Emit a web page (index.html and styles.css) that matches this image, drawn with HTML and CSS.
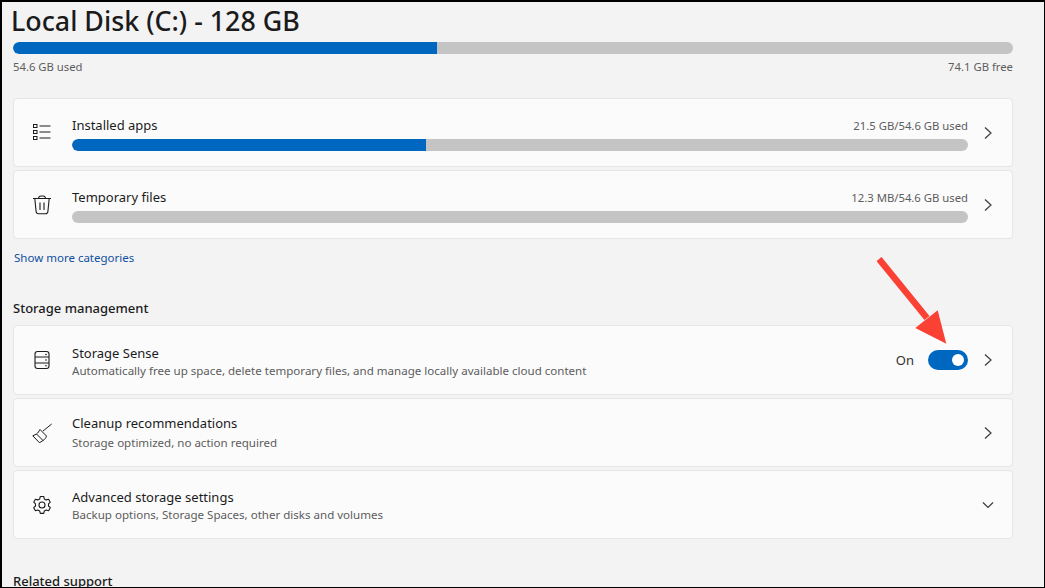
FILE: index.html
```html
<!DOCTYPE html>
<html lang="en">
<head>
<meta charset="utf-8">
<title>Storage</title>
<link rel="stylesheet" href="styles.css">
</head>
<body>
<main class="frame">
  <h1 class="title">Local Disk (C:) - 128 GB</h1>
  <div class="bar"><div class="fill" style="width:42.4%"></div></div>
  <div class="bar-labels"><span>54.6 GB used</span><span>74.1 GB free</span></div>

  <section class="group">
    <div class="card card-bar">
      <svg class="icon" viewBox="0 0 20 20"><g fill="none" stroke="#1c1c1c" stroke-width="1"><rect x="1.500" y="1.500" width="3.500" height="3"/><rect x="1.500" y="7.500" width="3.500" height="3"/><rect x="1.500" y="13.500" width="3.500" height="3"/><path d="M7.500 3h11M7.500 9h11M7.500 15h11"/></g></svg>
      <div class="body">
        <div class="row"><span class="name">Installed apps</span><span class="meta">21.5 GB/54.6 GB used</span></div>
        <div class="bar"><div class="fill" style="width:39.5%"></div></div>
      </div>
      <svg class="chev" viewBox="0 0 10 14"><path d="M2 1.500 8 7l-6 5.500"/></svg>
    </div>
    <div class="card card-bar">
      <svg class="icon" viewBox="0 0 20 20"><g fill="none" stroke="#1c1c1c" stroke-width="1.100"><path d="M1 3.500h18M6.500 3.500V3a2.500 2.500 0 0 1 2.500-2h2a2.500 2.500 0 0 1 2.500 2v.5M2.800 3.500l1.300 13a2.500 2.500 0 0 0 2.500 2.300h6.800a2.500 2.500 0 0 0 2.500-2.300l1.300-13M8 7.500v7.500M12 7.500v7.500"/></g></svg>
      <div class="body">
        <div class="row"><span class="name">Temporary files</span><span class="meta">12.3 MB/54.6 GB used</span></div>
        <div class="bar"></div>
      </div>
      <svg class="chev" viewBox="0 0 10 14"><path d="M2 1.500 8 7l-6 5.500"/></svg>
    </div>
  </section>

  <a class="more" href="#">Show more categories</a>
  <h2 class="heading">Storage management</h2>

  <section class="group">
    <div class="card card-tall">
      <svg class="icon" viewBox="0 0 20 20"><g fill="none" stroke="#1c1c1c" stroke-width="1.100"><rect x="3" y="1.500" width="14" height="17" rx="2.500"/><path d="M3 7h14M3 13h14"/></g><circle cx="14" cy="4.500" r=".8" fill="#1c1c1c"/><circle cx="14" cy="10" r=".8" fill="#1c1c1c"/><circle cx="14" cy="15.800" r=".8" fill="#1c1c1c"/></svg>
      <div class="body">
        <div class="name">Storage Sense</div>
        <div class="sub">Automatically free up space, delete temporary files, and manage locally available cloud content</div>
      </div>
      <span class="state">On</span>
      <span class="toggle"><span class="knob"></span></span>
      <svg class="chev" viewBox="0 0 10 14"><path d="M2 1.500 8 7l-6 5.500"/></svg>
    </div>
    <div class="card">
      <svg class="icon" viewBox="0 0 20 20"><g fill="none" stroke="#1c1c1c" stroke-width="1"><path d="M19.700 1 11 8M8 6.500l6.500 6.500c-.6 2-1.800 3.500-3.500 4.500L7.500 19.800.8 12.800 4.500 11c1.500-1 2.500-2.800 3.500-4.500zM4.500 11l6.500 6.500"/></g></svg>
      <div class="body body-wide">
        <div class="name">Cleanup recommendations</div>
        <div class="sub">Storage optimized, no action required</div>
      </div>
      <svg class="chev" viewBox="0 0 10 14"><path d="M2 1.500 8 7l-6 5.500"/></svg>
    </div>
    <div class="card">
      <svg class="icon" viewBox="0 0 20 20"><g fill="none" stroke="#1c1c1c" stroke-width="1.100"><circle cx="10" cy="10" r="3"/><path d="M8.300 1.500h3.400l.6 2.400 1.900 1 2.400-.7 1.700 3-1.800 1.700v2.100l1.800 1.700-1.700 3-2.400-.7-1.900 1-.6 2.400H8.300l-.6-2.400-1.900-1-2.400.7-1.700-3 1.800-1.700V8.900L1.700 7.200l1.700-3 2.400.7 1.900-1z" stroke-linejoin="round"/></g></svg>
      <div class="body">
        <div class="name">Advanced storage settings</div>
        <div class="sub">Backup options, Storage Spaces, other disks and volumes</div>
      </div>
      <svg class="chev chev-down" viewBox="0 0 12 8"><path d="M1 1.500 6 6.500l5-5"/></svg>
    </div>
  </section>

  <h2 class="heading heading-last">Related support</h2>

  <svg class="arrow" viewBox="0 0 80 95"><path d="M2 2 50 61" stroke="#fb4034" stroke-width="6.500" fill="none"/><path d="M69.300 86.700 60.700 53.300 38.300 71z" fill="#fb4034"/></svg>
</main>
</body>
</html>
```
FILE: styles.css
```css
* { box-sizing: border-box; }
html, body { margin: 0; height: 100%; background: #000; overflow: hidden; }
body { font-family: "Noto Sans", "Open Sans", sans-serif; color: #1b1b1b; }
.frame {
  position: relative;
  width: 1042px;
  height: 585px;
  margin: 2px 0 0 2px;
  padding: 0 31px 0 11px;
  background: #f3f3f3;
  overflow: hidden;
}
.title { margin: 0 0 0 -2px; height: 40px; font-size: 26.800px; line-height: 37px; font-weight: 500; white-space: nowrap; }
.bar { height: 12px; border-radius: 6px; background: #c4c4c4; overflow: hidden; }
.fill { height: 100%; border-radius: 6px 0 0 6px; background: #0067c0; }
.bar-labels { display: flex; justify-content: space-between; font-size: 11.300px; line-height: 14px; color: #5d5d5d; margin-top: 6px; height: 38px; }
.group { display: flex; flex-direction: column; gap: 3px; }
.card {
  display: flex; align-items: center; height: 69px; padding: 0 19px 0 18px;
  background: #fbfbfb; border: 1px solid #e6e6e6; border-radius: 4px;
}
.card-tall { height: 70px; }
.icon { width: 20px; height: 20px; flex: none; margin-right: 20px; }
.body { flex: 1; min-width: 0; padding-top: 2px; }
.body .sub { margin-top: 1px; }
.body-wide { padding-top: 0; }
.body-wide .sub { margin-top: 3px; }
.row { display: flex; justify-content: space-between; align-items: baseline; margin-bottom: 5px; }
.name { font-size: 13px; line-height: 18px; color: #1b1b1b; }
.meta { font-size: 11.300px; color: #5d5d5d; }
.sub { font-size: 11.550px; line-height: 16px; color: #5d5d5d; white-space: nowrap; }
.chev { width: 10px; height: 14px; flex: none; margin-left: 15px; fill: none; stroke: #3c3c3c; stroke-width: 1.200; }
.chev-down { width: 12px; height: 8px; margin-left: 0; margin-right: -1px; }
.state { font-size: 13px; margin-right: 14px; color: #333; }
.toggle { display: flex; justify-content: flex-end; align-items: center; width: 40px; height: 20px; padding-right: 4px; background: #0067c0; border-radius: 10px; flex: none; }
.knob { width: 12px; height: 12px; border-radius: 50%; background: #fff; }
.more { display: block; margin: 11px 0 0 1px; font-size: 11.500px; line-height: 16px; color: #0f4fa0; text-decoration: none; }
.heading { margin: 33px 0 8px; font-size: 13px; line-height: 18px; font-weight: 500; color: #1b1b1b; }
.arrow { position: absolute; left: 875px; top: 255px; width: 80px; height: 95px; }
```
